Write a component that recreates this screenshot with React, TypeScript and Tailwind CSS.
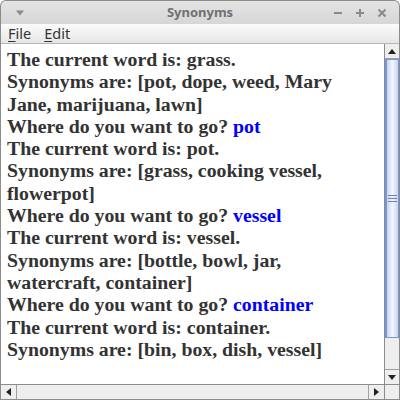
import React from "react";

const lines: { t: string; blue?: string }[] = [
  { t: "The current word is: grass." },
  { t: "Synonyms are: [pot, dope, weed, Mary" },
  { t: "Jane, marijuana, lawn]" },
  { t: "Where do you want to go? ", blue: "pot" },
  { t: "The current word is: pot." },
  { t: "Synonyms are: [grass, cooking vessel," },
  { t: "flowerpot]" },
  { t: "Where do you want to go? ", blue: "vessel" },
  { t: "The current word is: vessel." },
  { t: "Synonyms are: [bottle, bowl, jar," },
  { t: "watercraft, container]" },
  { t: "Where do you want to go? ", blue: "container" },
  { t: "The current word is: container." },
  { t: "Synonyms are: [bin, box, dish, vessel]" },
  { t: "" },
];

export default function App() {
  return (
    <div className="w-[400px] h-[400px] bg-[#8c8c8c] rounded-t-[6px] p-px flex flex-col overflow-hidden">
      {/* title bar */}
      <div className="h-[23px] shrink-0 rounded-t-[5px] bg-gradient-to-b from-[#e4e4e4] to-[#d6d6d6] flex items-center px-[10px] relative">
        <svg width="10" height="6" viewBox="0 0 10 6" className="ml-[4px]">
          <path d="M1 0.5 L9 0.5 L5 5.5 Z" fill="#8a8a8a" />
        </svg>
        <div className="absolute left-0 right-0 top-0 h-[23px] flex items-center justify-center text-[13px] font-bold text-[#707070] [font-family:'Noto_Sans',sans-serif]">Synonyms</div>
        <div className="ml-auto flex items-center gap-[12px] mr-[2px]">
          <svg width="10" height="10" viewBox="0 0 10 10"><path d="M1 5 H9" stroke="#8a8a8a" strokeWidth="2" /></svg>
          <svg width="10" height="10" viewBox="0 0 10 10"><path d="M1 5 H9 M5 1 V9" stroke="#8a8a8a" strokeWidth="2" /></svg>
          <svg width="10" height="10" viewBox="0 0 10 10"><path d="M1.5 1.5 L8.5 8.5 M8.5 1.5 L1.5 8.5" stroke="#8a8a8a" strokeWidth="2" /></svg>
        </div>
      </div>
      {/* menu bar */}
      <div className="h-[20px] shrink-0 bg-gradient-to-b from-[#fbfbfb] to-[#e6e6e6] flex items-center text-[14.5px] text-[#333333] border-b border-[#b8b8b8] [font-family:'Noto_Sans',sans-serif]">
        <span className="ml-[7px]"><span className="underline underline-offset-2">F</span>ile</span>
        <span className="ml-[13px]"><span className="underline underline-offset-2">E</span>dit</span>
      </div>
      {/* body */}
      <div className="flex-1 flex flex-col bg-[#eeeeee] min-h-0">
        <div className="flex-1 flex min-h-0">
          <div className="flex-1 bg-white overflow-hidden pl-[6px] pt-[4px] text-[#333333] text-[19.8px] leading-[22.3px] font-bold [font-family:'Liberation_Serif',serif]">
            {lines.map((l, i) => (
              <p key={i} className="whitespace-nowrap h-[22.3px]">
                {l.t}
                {l.blue && <span className="text-[#0000ff]">{l.blue}</span>}
              </p>
            ))}
          </div>
          {/* vertical scrollbar */}
          <div className="w-[15px] shrink-0 flex flex-col bg-[#eeeeee] border-l border-[#8c8c8c]">
            <div className="h-[15px] shrink-0 bg-[#eeeeee] border-b border-[#a0a0a0] flex items-center justify-center">
              <svg width="8" height="5" viewBox="0 0 8 5"><path d="M0 5 L4 0 L8 5 Z" fill="#222" /></svg>
            </div>
            <div className="h-[279px] shrink-0 bg-gradient-to-r from-[#c5d5f0] via-[#f4f7fc] to-[#c5d5f0] border border-[#7a95d4] border-l-2 flex items-center justify-center">
              <div className="flex flex-col gap-[2px]">
                <div className="w-[9px] h-px bg-[#6b7fc0]" />
                <div className="w-[9px] h-px bg-[#6b7fc0]" />
                <div className="w-[9px] h-px bg-[#6b7fc0]" />
              </div>
            </div>
            <div className="flex-1" />
            <div className="h-[15px] shrink-0 bg-[#eeeeee] border-t border-[#a0a0a0] flex items-center justify-center">
              <svg width="8" height="5" viewBox="0 0 8 5"><path d="M0 0 L8 0 L4 5 Z" fill="#222" /></svg>
            </div>
          </div>
        </div>
        {/* horizontal scrollbar */}
        <div className="h-[15px] shrink-0 flex border-t border-[#8c8c8c]">
          <div className="w-[16px] shrink-0 border-r border-[#a0a0a0] flex items-center justify-center">
            <svg width="5" height="8" viewBox="0 0 5 8"><path d="M5 0 L0 4 L5 8 Z" fill="#222" /></svg>
          </div>
          <div className="flex-1" />
          <div className="w-[16px] shrink-0 border-l border-[#a0a0a0] flex items-center justify-center">
            <svg width="5" height="8" viewBox="0 0 5 8"><path d="M0 0 L5 4 L0 8 Z" fill="#222" /></svg>
          </div>
          <div className="w-[15px] shrink-0 border-l border-[#8c8c8c] bg-[#eeeeee]" />
        </div>
      </div>
    </div>
  );
}
